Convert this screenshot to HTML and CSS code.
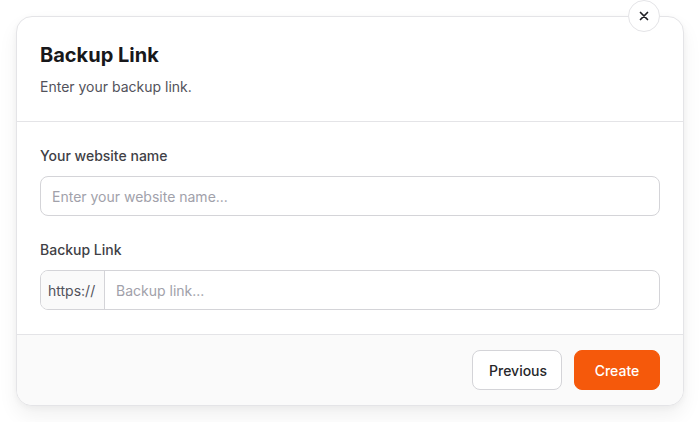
FILE: index.html
```html
<!DOCTYPE html>
<html lang="en">
<head>
<meta charset="utf-8">
<link rel="stylesheet" href="styles.css">
</head>
<body>
<div class="modal">
  <button class="close" aria-label="Close">
    <svg width="10" height="10" viewBox="0 0 10 10"><path d="M1.5 1.5 L8.5 8.5 M8.5 1.5 L1.5 8.5" stroke="#1f1f23" stroke-width="1.7" stroke-linecap="round" fill="none"/></svg>
  </button>
  <div class="head">
    <h2 class="title">Backup Link</h2>
    <p class="sub">Enter your backup link.</p>
  </div>
  <div class="body">
    <div class="field">
      <label class="label">Your website name</label>
      <div class="input"><span class="ph">Enter your website name...</span></div>
    </div>
    <div class="field">
      <label class="label">Backup Link</label>
      <div class="input group"><span class="addon">https://</span><span class="ph">Backup link...</span></div>
    </div>
  </div>
  <div class="foot">
    <button class="btn prev">Previous</button>
    <button class="btn create">Create</button>
  </div>
</div>
</body>
</html>
```
FILE: styles.css
```css
* { box-sizing: border-box; }
html, body { margin: 0; padding: 0; background: #fff; }
body {
  font-family: Inter, "Noto Sans", sans-serif;
  padding: 16px;
  width: 700px;
}
.modal {
  position: relative;
  width: 668px;
  border: 1px solid #e4e4e7;
  border-radius: 16px;
  background: #fff;
  box-shadow: 0 10px 20px rgba(0,0,0,0.06), 0 2px 6px rgba(0,0,0,0.04);
}
.close {
  position: absolute;
  top: -17px;
  right: 23px;
  width: 32px;
  height: 32px;
  border-radius: 50%;
  border: 1px solid #e4e4e7;
  background: #fff;
  display: flex;
  align-items: center;
  justify-content: center;
  padding: 0;
}
.head {
  padding: 24px 23px 24px;
  border-bottom: 1px solid #e4e4e7;
}
.title {
  margin: 0;
  font-size: 20px;
  line-height: 28px;
  font-weight: 700;
  color: #18181b;
}
.sub {
  margin: 8px 0 0;
  font-size: 14px;
  line-height: 20px;
  color: #52525b;
}
.body {
  padding: 24px 23px;
  display: flex;
  flex-direction: column;
  gap: 24px;
  border-bottom: 1px solid #e4e4e7;
}
.field { display: flex; flex-direction: column; gap: 10px; }
.label {
  font-size: 14px;
  line-height: 20px;
  font-weight: 500;
  color: #3f3f46;
}
.input {
  height: 40px;
  border: 1px solid #d4d4d8;
  border-radius: 8px;
  display: flex;
  align-items: center;
  padding: 0 11px;
  font-size: 14px;
}
.ph { color: #a1a1aa; }
.group { padding: 0; overflow: hidden; }
.group .ph { padding-left: 11px; }
.addon {
  height: 100%;
  display: flex;
  align-items: center;
  padding: 0 8px 0 7px;
  background: #fafafa;
  border-right: 1px solid #d4d4d8;
  color: #52525b;
  width: 64px;
}
.foot {
  background: #fafafa;
  border-radius: 0 0 15px 15px;
  padding: 15px 23px 15px;
  display: flex;
  justify-content: flex-end;
  gap: 12px;
}
.btn {
  height: 40px;
  border-radius: 8px;
  font-family: Inter, "Noto Sans", sans-serif;
  font-size: 14px;
  font-weight: 500;
  padding: 0 16px;
  cursor: pointer;
}
.prev {
  width: 90px;
  background: #fff;
  border: 1px solid #d4d4d8;
  color: #27272a;
}
.create {
  width: 86px;
  background: #f5590b;
  border: 1px solid #f5590b;
  color: #fff;
}
```
